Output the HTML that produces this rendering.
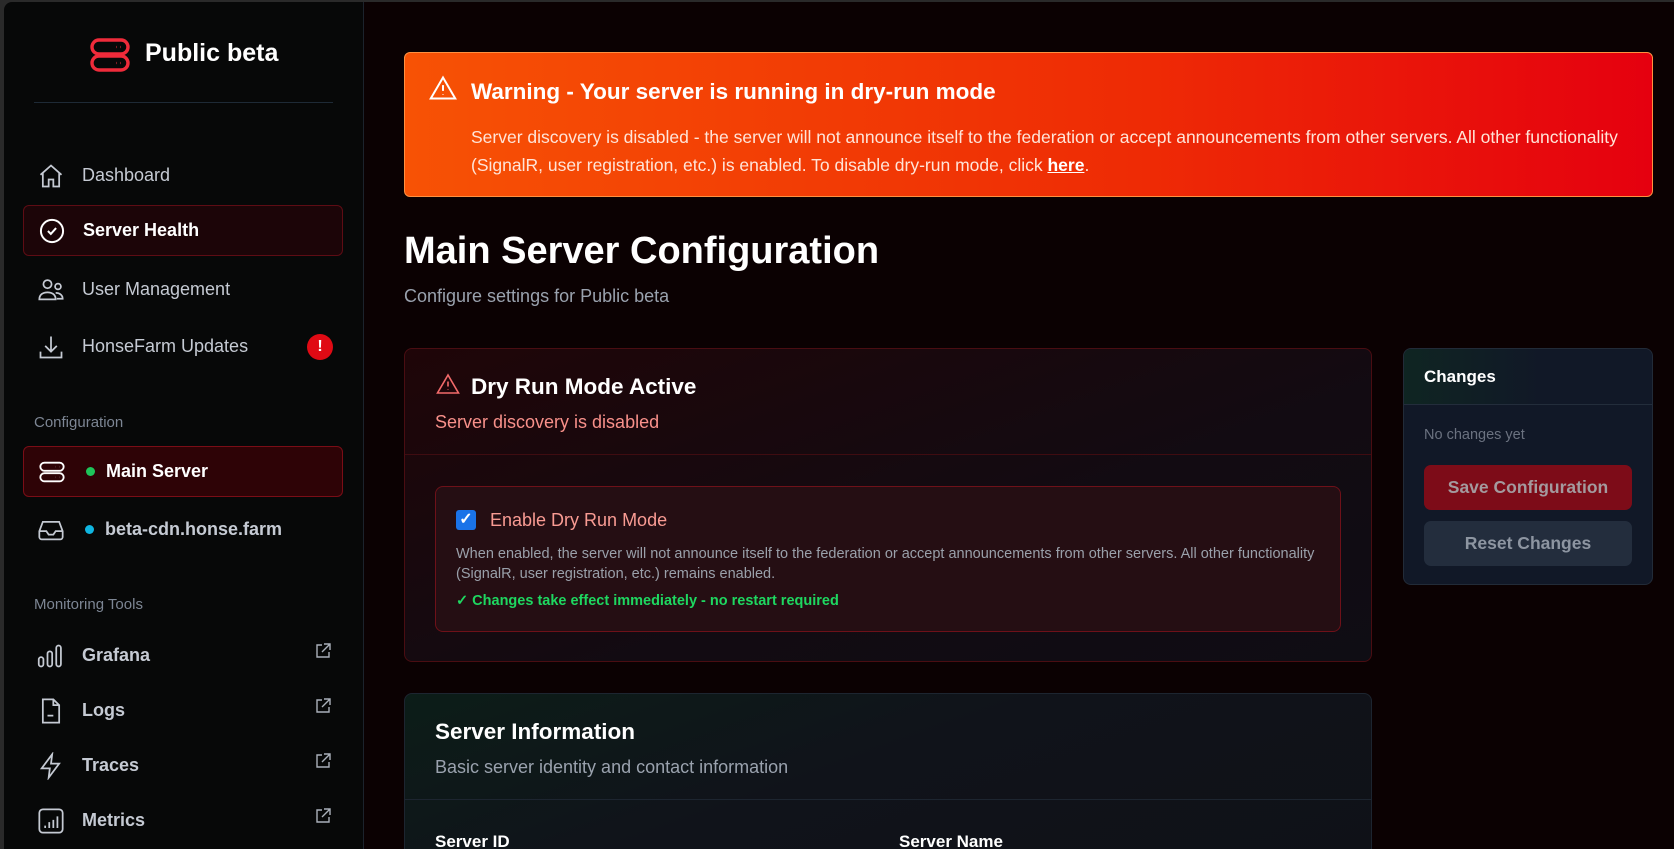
<!DOCTYPE html>
<html style="background:#0b0102"><head><meta charset="utf-8">
<style>
*{box-sizing:border-box;margin:0;padding:0}
html,body{width:1674px;height:849px;overflow:hidden}
body{background:#0b0102;font-family:"Liberation Sans",sans-serif;position:relative}
.frame{position:absolute;left:0;top:0;width:1674px;height:849px;background:#2a2a2a}
.side{position:absolute;left:4px;top:2px;width:360px;height:847px;background:#070808;border-right:1px solid #1c232c;border-top-left-radius:8px}
.main{position:absolute;left:364px;top:2px;width:1310px;height:847px;background:#0b0102}
.abs{position:absolute}
.nav{position:absolute;left:19px;width:320px;height:51px;display:flex;align-items:center;padding-left:14px;color:#c5cad3;font-size:18px}
.nav svg{width:28px;height:28px;margin-right:17px;flex:none}
.act{background:#1c0508;border:1px solid #5e0c14;border-radius:6px;color:#fff;font-weight:bold}
.lbl{position:absolute;left:30px;color:#7d8694;font-size:15px}
.ext{position:absolute;left:310px;width:18px;height:18px}
.card{position:absolute;border-radius:8px}
</style></head><body>
<div class="frame"></div>
<div class="side">
  <svg class="abs" style="left:86px;top:36px" width="40" height="34" viewBox="0 0 40 34" fill="none" stroke="#ef2b3a" stroke-width="3.4"><rect x="2" y="2" width="36" height="14" rx="7"/><rect x="2" y="18" width="36" height="14" rx="7"/><path d="M26 9h.5M30 9h.5M26 25h.5M30 25h.5" stroke-width="2.2"/></svg>
  <div class="abs" style="left:141px;top:37px;color:#fff;font-size:25px;font-weight:bold">Public beta</div>
  <div class="abs" style="left:30px;top:100px;width:299px;height:1px;background:#1e2a36"></div>

  <div class="nav" style="top:148px"><svg viewBox="0 0 24 24" fill="none" stroke="#c5cad3" stroke-width="1.5"><path d="M3 11l9-8 9 8M5 9.5V21h5v-6h4v6h5V9.5"/></svg>Dashboard</div>
  <div class="nav act" style="top:203px"><svg viewBox="0 0 24 24" fill="none" stroke="#fff" stroke-width="1.7"><circle cx="12" cy="12" r="9.5"/><path d="M8.5 12l2.5 2.5 4.5-5"/></svg>Server Health</div>
  <div class="nav" style="top:262px"><svg viewBox="0 0 24 24" fill="none" stroke="#c5cad3" stroke-width="1.5"><circle cx="9" cy="7" r="3.5"/><circle cx="18" cy="9" r="2.5"/><path d="M2 20c0-4 3-6 7-6s7 2 7 6zM16 14.5c3 0 6 1.5 6 5h-5"/></svg>User Management</div>
  <div class="nav" style="top:319px"><svg viewBox="0 0 24 24" fill="none" stroke="#c5cad3" stroke-width="1.5"><path d="M12 3v13M7 11l5 5 5-5M3 16v5h18v-5"/></svg>HonseFarm Updates</div>
  <div class="abs" style="left:303px;top:332px;width:26px;height:26px;border-radius:50%;background:#e00a14;color:#fff;font-weight:bold;font-size:16px;text-align:center;line-height:26px">!</div>

  <div class="lbl" style="top:412px">Configuration</div>
  <div class="nav act" style="top:444px;background:#2e0306;border-color:#7a0d16"><svg viewBox="0 0 24 24" fill="none" stroke="#fff" stroke-width="1.6"><rect x="2" y="4" width="20" height="7" rx="3.5"/><rect x="2" y="13" width="20" height="7" rx="3.5"/><path d="M15 7.5h.1M18 7.5h.1M15 16.5h.1M18 16.5h.1"/></svg><span style="width:9px;height:9px;border-radius:50%;background:#1ec55a;margin:0 11px 0 3px"></span>Main Server</div>
  <div class="nav" style="top:502px;font-weight:bold;color:#c5cad3"><svg viewBox="0 0 24 24" fill="none" stroke="#c5cad3" stroke-width="1.5"><path d="M2 13l3-8h14l3 8v5a2 2 0 01-2 2H4a2 2 0 01-2-2zM2 13h6l2 3h4l2-3h6"/></svg><span style="width:9px;height:9px;border-radius:50%;background:#0fb5e0;margin:0 11px 0 3px"></span>beta-cdn.honse.farm</div>

  <div class="lbl" style="top:594px">Monitoring Tools</div>
  <div class="nav" style="top:628px;font-weight:bold"><svg viewBox="0 0 24 24" fill="none" stroke="#c5cad3" stroke-width="1.5"><rect x="1.5" y="13" width="4" height="8" rx="2"/><rect x="9" y="8" width="4" height="13" rx="2"/><rect x="16.5" y="3" width="4" height="18" rx="2"/></svg>Grafana</div>
  <div class="nav" style="top:683px;font-weight:bold"><svg viewBox="0 0 24 24" fill="none" stroke="#c5cad3" stroke-width="1.5"><path d="M5 2h9l5 5v15H5zM14 2v5h5M9 16h5"/></svg>Logs</div>
  <div class="nav" style="top:738px;font-weight:bold"><svg viewBox="0 0 24 24" fill="none" stroke="#c5cad3" stroke-width="1.5"><path d="M13 2L4 14h7l-1 8 9-12h-7z"/></svg>Traces</div>
  <div class="nav" style="top:793px;font-weight:bold"><svg viewBox="0 0 24 24" fill="none" stroke="#c5cad3" stroke-width="1.5"><rect x="2" y="2" width="20" height="20" rx="3"/><path d="M7 18v-2M10.5 18v-5M14 18v-7M17.5 18V8"/></svg>Metrics</div>
  <svg class="ext" style="top:640px" viewBox="0 0 18 18" fill="none" stroke="#aab0ba" stroke-width="1.4"><path d="M8 3H3v12h12v-5M10 2h6v6M16 2L8 10"/></svg>
  <svg class="ext" style="top:695px" viewBox="0 0 18 18" fill="none" stroke="#aab0ba" stroke-width="1.4"><path d="M8 3H3v12h12v-5M10 2h6v6M16 2L8 10"/></svg>
  <svg class="ext" style="top:750px" viewBox="0 0 18 18" fill="none" stroke="#aab0ba" stroke-width="1.4"><path d="M8 3H3v12h12v-5M10 2h6v6M16 2L8 10"/></svg>
  <svg class="ext" style="top:805px" viewBox="0 0 18 18" fill="none" stroke="#aab0ba" stroke-width="1.4"><path d="M8 3H3v12h12v-5M10 2h6v6M16 2L8 10"/></svg>
</div>

<div class="main"></div>
<div class="card" style="left:404px;top:52px;width:1249px;height:145px;background:linear-gradient(90deg,#f75205,#ee2a05 60%,#e5000f);border:1.5px solid #ff9040;border-radius:6px">
  <svg class="abs" style="left:24px;top:22px" width="28" height="26" viewBox="0 0 24 22" fill="none" stroke="#fff" stroke-width="1.7"><path d="M12 2L1.5 20h21z"/><path d="M12 8.5v5M12 16.3v.4"/></svg>
  <div class="abs" style="left:66px;top:26px;color:#fff;font-size:22.5px;font-weight:bold">Warning - Your server is running in dry-run mode</div>
  <div class="abs" style="left:66px;top:70px;width:1170px;color:#ffe4d8;font-size:17.5px;line-height:28px">Server discovery is disabled - the server will not announce itself to the federation or accept announcements from other servers. All other functionality (SignalR, user registration, etc.) is enabled. To disable dry-run mode, click <b style="color:#fff;text-decoration:underline">here</b>.</div>
</div>

<div class="abs" style="left:404px;top:230px;color:#fff;font-size:38px;font-weight:bold">Main Server Configuration</div>
<div class="abs" style="left:404px;top:286px;color:#9aa2ae;font-size:18px">Configure settings for Public beta</div>

<div class="card" style="left:404px;top:348px;width:968px;height:314px;background:linear-gradient(160deg,#1f0508,#120b12 60%,#0f0d14);border:1px solid #4a0d12">
  <svg class="abs" style="left:31px;top:24px" width="24" height="22" viewBox="0 0 24 22" fill="none" stroke="#f26a6a" stroke-width="1.6"><path d="M12 2L1.5 20h21z"/><path d="M12 8.5v5M12 16.3v.4"/></svg>
  <div class="abs" style="left:66px;top:25px;color:#fff;font-size:22.5px;font-weight:bold">Dry Run Mode Active</div>
  <div class="abs" style="left:30px;top:63px;color:#f8908a;font-size:18px">Server discovery is disabled</div>
  <div class="abs" style="left:0;top:105px;width:966px;height:1px;background:#3f0c11"></div>
  <div class="abs" style="left:30px;top:137px;width:906px;height:146px;border:1px solid #6e1119;border-radius:8px;background:#250e13">
    <div class="abs" style="left:20px;top:23px;width:20px;height:20px;background:#1a73e8;border-radius:3px;color:#fff;font-size:16px;font-weight:bold;text-align:center;line-height:20px">✓</div>
    <div class="abs" style="left:54px;top:23px;color:#f99b93;font-size:18px">Enable Dry Run Mode</div>
    <div class="abs" style="left:20px;top:57px;width:860px;color:#9aa0aa;font-size:14.5px;line-height:20px">When enabled, the server will not announce itself to the federation or accept announcements from other servers. All other functionality (SignalR, user registration, etc.) remains enabled.</div>
    <div class="abs" style="left:20px;top:106px;color:#1ed760;font-size:14.5px;font-weight:bold">✓ Changes take effect immediately - no restart required</div>
  </div>
</div>

<div class="card" style="left:404px;top:693px;width:968px;height:170px;background:linear-gradient(160deg,#0c1d18,#10131a 45%,#0f1117);border:1px solid #1d2530">
  <div class="abs" style="left:30px;top:25px;color:#fff;font-size:22.5px;font-weight:bold">Server Information</div>
  <div class="abs" style="left:30px;top:63px;color:#9aa2ae;font-size:18px">Basic server identity and contact information</div>
  <div class="abs" style="left:0;top:105px;width:966px;height:1px;background:#1d2530"></div>
  <div class="abs" style="left:30px;top:138px;color:#fff;font-size:17px;font-weight:bold">Server ID</div>
  <div class="abs" style="left:494px;top:138px;color:#fff;font-size:17px;font-weight:bold">Server Name</div>
</div>

<div class="card" style="left:1403px;top:348px;width:250px;height:237px;background:#111827;border:1px solid #222b38;overflow:hidden">
  <div class="abs" style="left:0;top:0;width:250px;height:56px;background:linear-gradient(90deg,#0f2522,#111827 55%);border-bottom:1px solid #232d3b"></div>
  <div class="abs" style="left:20px;top:18px;color:#fff;font-size:17px;font-weight:bold">Changes</div>
  <div class="abs" style="left:20px;top:78px;color:#6b7280;font-size:14.5px">No changes yet</div>
  <div class="abs" style="left:20px;top:116px;width:208px;height:45px;border-radius:7px;background:#7d0c18;color:#a49a9e;font-size:17.5px;font-weight:bold;text-align:center;line-height:45px">Save Configuration</div>
  <div class="abs" style="left:20px;top:172px;width:208px;height:45px;border-radius:7px;background:#232d3d;color:#8d95a1;font-size:17.5px;font-weight:bold;text-align:center;line-height:45px">Reset Changes</div>
</div>
</body></html>
